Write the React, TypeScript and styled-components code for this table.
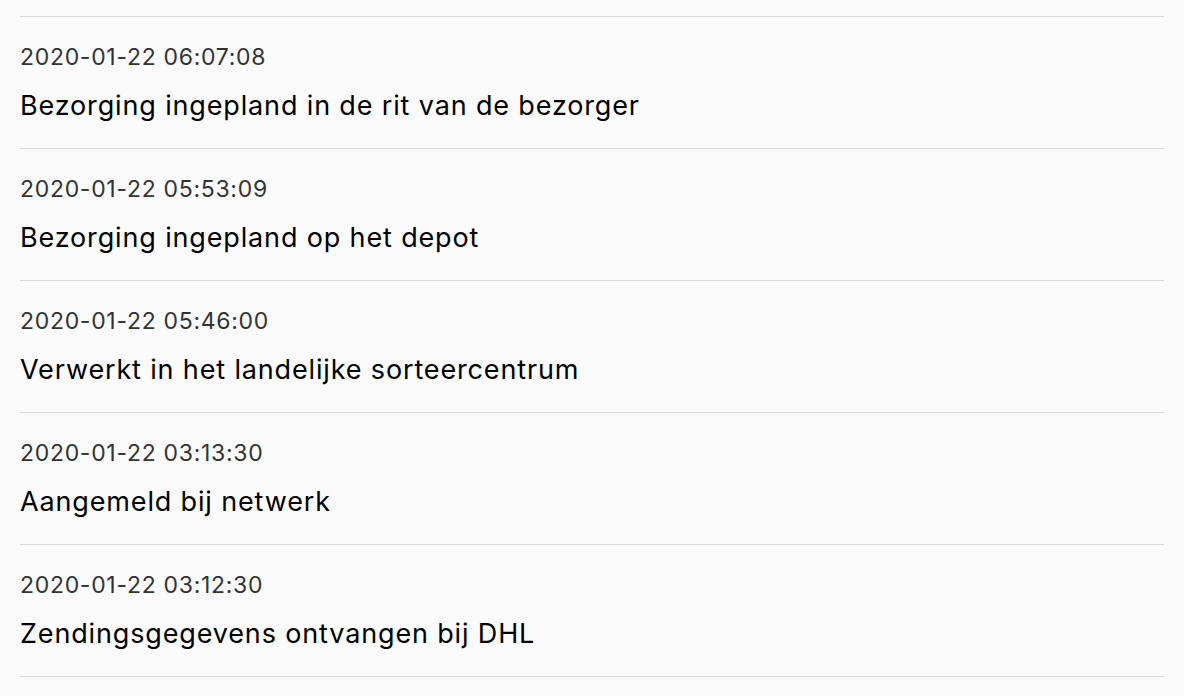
import { createGlobalStyle, styled } from "styled-components";

const events = [
  { time: "2020-01-22 06:07:08", text: "Bezorging ingepland in de rit van de bezorger" },
  { time: "2020-01-22 05:53:09", text: "Bezorging ingepland op het depot" },
  { time: "2020-01-22 05:46:00", text: "Verwerkt in het landelijke sorteercentrum" },
  { time: "2020-01-22 03:13:30", text: "Aangemeld bij netwerk" },
  { time: "2020-01-22 03:12:30", text: "Zendingsgegevens ontvangen bij DHL" },
];

const App = () => {
  return (
    <>
      <GlobalStyle />
      <TimelineLayout>
        <EventList>
          {events.map((item) => {
            return (
              <EventRow key={item.time}>
                <EventTime>{item.time}</EventTime>
                <EventText>{item.text}</EventText>
              </EventRow>
            );
          })}
        </EventList>
      </TimelineLayout>
    </>
  );
};

export default App;

const GlobalStyle = createGlobalStyle`
  body {
    margin: 0;
    background: #fafafa;
    font-family: Inter, "Noto Sans", sans-serif;
  }
`;

const TimelineLayout = styled.div`
  padding: 16px 20px 0;
`;

const EventList = styled.ul`
  margin: 0;
  padding: 0;
  list-style: none;

  border-bottom: 1px solid #dcdcdc;
`;

const EventRow = styled.li`
  height: 132px;
  box-sizing: border-box;

  display: flex;
  flex-direction: column;
  gap: 19px;

  padding-top: 26px;

  border-top: 1px solid #dcdcdc;
`;

const EventTime = styled.p`
  margin: 0;

  font-size: 23px;
  line-height: 28px;
  letter-spacing: 0.7px;
  color: #333;
`;

const EventText = styled.p`
  margin: 0;

  font-size: 27px;
  line-height: 32px;
  letter-spacing: 0.85px;
  color: #000;
`;
